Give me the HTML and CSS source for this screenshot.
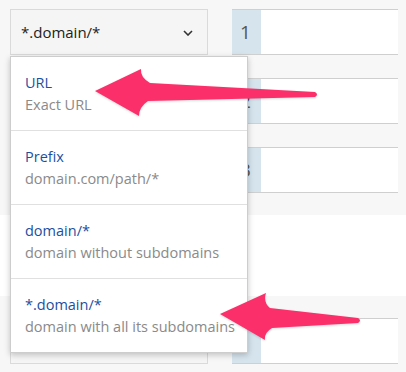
FILE: index.html
```html
<!DOCTYPE html>
<html lang="en">
<head>
    <meta charset="UTF-8">
    <meta name="viewport" content="width=device-width, initial-scale=1.0">
    <title>Rules</title>
    <link rel="stylesheet" href="styles.css">
</head>
<body>
    <div class="rules">
        <div class="rule">
            <div class="select">
                <span>*.domain/*</span>
                <svg class="chevron" width="10" height="6" viewBox="0 0 10 6"><polyline points="1,1 5,5 9,1" fill="none" stroke="#333" stroke-width="1.6"/></svg>
            </div>
            <div class="field"><span class="num">1</span><span class="value"></span></div>
        </div>
        <div class="rule">
            <div class="select"><span>*.domain/*</span></div>
            <div class="field"><span class="num">2</span><span class="value"></span></div>
        </div>
        <div class="rule">
            <div class="select"><span>*.domain/*</span></div>
            <div class="field"><span class="num">3</span><span class="value"></span></div>
        </div>
        <div class="blank"></div>
        <div class="rule">
            <div class="select"><span>*.domain/*</span></div>
            <div class="field"><span class="num"></span><span class="value"></span></div>
        </div>
    </div>

    <ul class="dropdown">
        <li>
            <div class="title">URL</div>
            <div class="desc">Exact URL</div>
        </li>
        <li>
            <div class="title">Prefix</div>
            <div class="desc">domain.com/path/*</div>
        </li>
        <li>
            <div class="title">domain/*</div>
            <div class="desc">domain without subdomains</div>
        </li>
        <li>
            <div class="title">*.domain/*</div>
            <div class="desc">domain with all its subdomains</div>
        </li>
    </ul>

    <!-- annotation arrows -->
    <svg class="arrows" width="406" height="372" viewBox="0 0 406 372">
        <path d="M95 91 L141 69 Q140 77 150 83 L315 92 Q319 94.5 315 97 L148 101 Q139 107 139 116 Z"/>
        <path d="M220 314 L266 293 Q263 302 270 308 L358 318 Q362 320.5 358 323 L272 328 Q264 333 265 340 Z"/>
    </svg>
</body>
</html>
```
FILE: styles.css
```css
body {
    margin: 0;
    background-color: #f7f7f7;
    font-family: 'Open Sans', Arial, sans-serif;
    font-size: 15px;
    color: #333;
}

.rules {
    padding-top: 9px;
}

.rule {
    display: flex;
    gap: 24px;
    height: 46px;
    padding-left: 10px;
    margin-bottom: 23px;
}

.select {
    width: 198px;
    box-sizing: border-box;
    border: 1px solid #dadada;
    background-color: #f5f5f5;
    display: flex;
    align-items: center;
    justify-content: space-between;
    padding: 0 14px 0 10px;
    color: #222;
}

.chevron {
    margin-top: 1px;
}

.field {
    width: 166px;
    display: flex;
    border-top: 1px solid #cfcfcf;
    border-bottom: 1px solid #cfcfcf;
}

.num {
    width: 29px;
    background-color: #d6e4ee;
    color: #555;
    font-size: 19px;
    padding-left: 8px;
    box-sizing: border-box;
    line-height: 44px;
}

.value {
    flex: 1;
    background-color: #fff;
}

.blank {
    height: 81px;
    background-color: #fff;
    margin: -1px 0 22px;
}

.dropdown {
    position: absolute;
    top: 56px;
    left: 10px;
    width: 238px;
    margin: 0;
    padding: 0;
    list-style: none;
    background-color: #fff;
    border: 1px solid #cdcdcd;
    box-shadow: 0 2px 6px rgba(0, 0, 0, 0.22);
    box-sizing: border-box;
}

.dropdown li {
    padding: 15px 14px 14px;
    border-top: 1px solid #e0e0e0;
    line-height: 22px;
    font-size: 14.5px;
    white-space: nowrap;
}

.dropdown li:first-child {
    border-top: none;
    padding-top: 15px;
}

.dropdown .title {
    color: #1c4f9f;
}

.dropdown .desc {
    color: #8a8a8a;
}

.arrows {
    position: absolute;
    top: 0;
    left: 0;
    fill: #fb2f69;
    filter: drop-shadow(0 1px 1px rgba(0, 0, 0, 0.15));
}
```
